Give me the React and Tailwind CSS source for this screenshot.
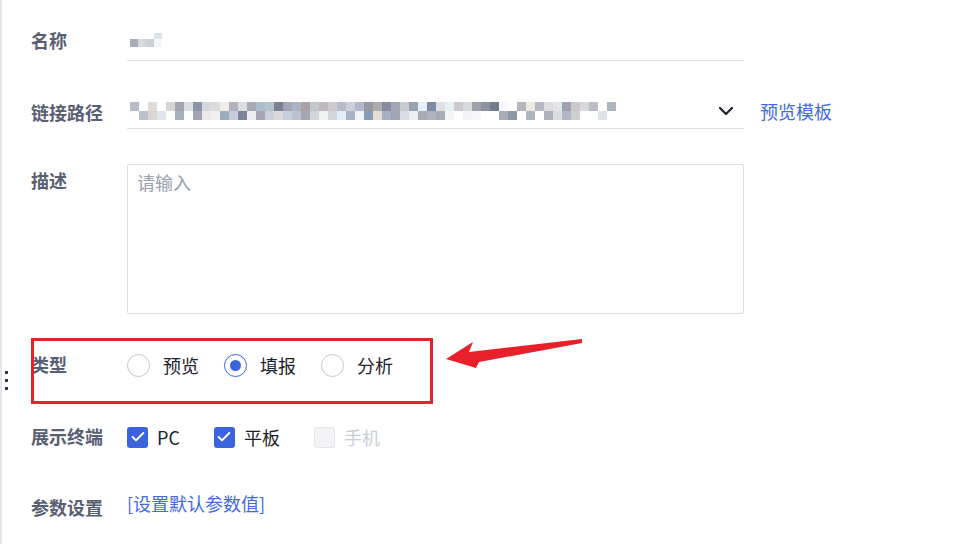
import { ChevronDown, Check } from 'lucide-react'

const FONT = { fontFamily: '"Noto Sans CJK SC", "Noto Sans", sans-serif' }

// mosaic blur of the masked field values
const nameMosaic = ['#a9acb8', '#d6d8de', '#cdd0d8', '#f3f6fa']
const linkTop = ['#b8bcc8', '#ffffff', '#e2dcd6', '#ffffff', '#d9d4d4', '#a3a5b0', '#dcdde2', '#8a93a8', '#d5d7dd', '#dcdbdc', '#f1ece7', '#b1b2bc', '#dcdee3', '#a8aab4', '#afbccb', '#b5c4cc', '#7e8195', '#a4a6b3', '#aab5c5', '#aca1a6', '#c5c7cf', '#bfb9c0', '#cecbcf', '#b7bcc8', '#cdd0d7', '#b3b8cb', '#969aa3', '#abadb2', '#868aa0', '#a0a8b4', '#c8cbd2', '#9aa3ae', '#e6f0fa', '#7f8ba3', '#dfe0e6', '#e9edf4', '#cbcbcd', '#d8d9dd', '#a0a1ab', '#8f92a1', '#737b90', '#f7f9fc', '#ffffff', '#b5b3bd', '#efe9df', '#b6bac4', '#dedde1', '#e4e5ea', '#9ea0ab', '#cdc8cc', '#d7d8de', '#bbbec6', '#ffffff', '#b0b4c0']
const linkBottom = ['#ffffff', '#bac0cd', '#dbd6d4', '#e0e4ec', '#ffffff', '#a6b0bf', '#ffffff', '#a3a3b1', '#ede9ea', '#f2f0f2', '#9eabbc', '#c5ccd7', '#7c8497', '#eeeeee', '#a7a6b0', '#ccd0d8', '#dad8dc', '#c7cfda', '#bac2d2', '#a6a5b1', '#d3d5dc', '#f2f2f3', '#d2d6dc', '#e3eef9', '#a9b3c6', '#eef4f8', '#8a9ab4', '#e6ddd4', '#a3b1c2', '#9fa3b2', '#dadbe3', '#eceff2', '#a8a9b5', '#aeb3c1', '#a5adb8', '#f5f5f7', '#ffffff', '#f4f4f6', '#f6f7f8', '#ffffff', '#ffffff', '#a9adba', '#9098a8', '#ffffff', '#acb4bd', '#ffffff', '#aeb0bb', '#dcdde0', '#b1b8c4', '#c9d0cd', '#ffffff', '#ffffff', '#dfe3e8', '#ffffff']

function Label({ children, className = '' }) {
  return (
    <div className={`w-[96px] shrink-0 text-[18px] font-bold text-[#585f72] ${className}`}>
      {children}
    </div>
  )
}

function Radio({ checked, label }) {
  return (
    <label className="flex items-center mr-[25px]">
      <span className={`w-[23px] h-[23px] rounded-full border flex items-center justify-center ${checked ? 'border-[#3b63dd]' : 'border-[#c2c6d0]'}`}>
        {checked && <span className="w-[11px] h-[11px] rounded-full bg-[#3b63dd]" />}
      </span>
      <span className="ml-[13px] text-[18px] text-[#1d2129]">{label}</span>
    </label>
  )
}

function Checkbox({ checked, disabled, label, last }) {
  return (
    <label className={`flex items-center ${last ? '' : 'mr-[34px]'}`}>
      <span className={`w-[21px] h-[21px] rounded-[3px] flex items-center justify-center ${checked ? 'bg-[#3b63dd]' : 'bg-[#f2f3f5] border border-[#e3e5ea]'}`}>
        {checked && <Check size={16} strokeWidth={3} color="#fff" />}
      </span>
      <span className={`ml-[9px] text-[18px] ${disabled ? 'text-[#c9cdd4]' : 'text-[#1d2129]'}`}>{label}</span>
    </label>
  )
}

export default function App() {
  return (
    <div className="relative w-[978px] h-[544px] bg-white overflow-hidden border-l-[2px] border-[#e3e5ea]" style={FONT}>
      <div className="pl-[29px]">
        {/* 名称 */}
        <div className="flex items-center mt-[23px]">
          <Label className="pb-[4px]">名称</Label>
          <div className="w-[617px] h-[38px] border-b border-[#dcdfe6] flex items-center pl-[3px] pb-[3px]">
            <div className="flex flex-col">
              <div className="flex"><span className="w-[8px] h-[6px]" /><span className="w-[8px] h-[6px]" /><span className="w-[8px] h-[6px]" /><span className="w-[8px] h-[6px] bg-[#dbe3ee]" /></div>
              <div className="flex">
                {nameMosaic.map((c, i) => <span key={i} className="w-[8px] h-[8px]" style={{ background: c }} />)}
              </div>
            </div>
          </div>
        </div>

        {/* 链接路径 */}
        <div className="flex items-center mt-[33px]">
          <Label className="pt-[2px]">链接路径</Label>
          <div className="w-[617px] h-[35px] border-b border-[#dcdfe6] flex items-center justify-between pl-[3px] pr-[6px]">
            <div className="flex flex-col">
              <div className="flex">
                {linkTop.map((c, i) => <span key={i} className="w-[9px] h-[9px]" style={{ background: c }} />)}
              </div>
              <div className="flex">
                {linkBottom.map((c, i) => <span key={i} className="w-[9px] h-[9px]" style={{ background: c }} />)}
              </div>
            </div>
            <ChevronDown size={24} strokeWidth={2.2} color="#1d2129" />
          </div>
          <span className="ml-[16px] text-[18px] text-[#3f6ae3]">预览模板</span>
        </div>

        {/* 描述 */}
        <div className="flex items-start mt-[35px]">
          <Label className="pt-[3px]">描述</Label>
          <div className="w-[617px] h-[150px] border border-[#dcdfe6] rounded-[2px] px-[9px] py-[4px] text-[18px] text-[#9aa0ad]">
            请输入
          </div>
        </div>

        {/* 类型 */}
        <div className="flex items-center mt-[38px] h-[26px]">
          <Label className="pb-[2px]">类型</Label>
          <Radio label="预览" />
          <Radio checked label="填报" />
          <Radio label="分析" />
        </div>

        {/* 展示终端 */}
        <div className="flex items-center mt-[47px] h-[24px]">
          <Label className="pb-[2px]">展示终端</Label>
          <Checkbox checked label="PC" />
          <Checkbox checked label="平板" />
          <Checkbox disabled label="手机" last />
        </div>

        {/* 参数设置 */}
        <div className="flex items-center mt-[41px] h-[26px]">
          <Label className="pt-[8px]">参数设置</Label>
          <span className="text-[18px] text-[#3f6ae3]">[设置默认参数值]</span>
        </div>
      </div>

      {/* drag handle dots */}
      <div className="absolute left-[3px] top-[371px] flex flex-col gap-[5px]">
        <span className="w-[3px] h-[3px] bg-[#2b3550]" />
        <span className="w-[3px] h-[3px] bg-[#2b3550]" />
        <span className="w-[3px] h-[3px] bg-[#2b3550]" />
      </div>

      {/* annotation */}
      <div className="absolute left-[29px] top-[338px] w-[402px] h-[66px] border-[3px] border-[#e8202a]" />
      <svg className="absolute left-0 top-0" width="978" height="544">
        <polygon points="444,359 471,342 467,352 580,339 580,343 477,362 474,368" fill="#e8202a" />
      </svg>
    </div>
  )
}
